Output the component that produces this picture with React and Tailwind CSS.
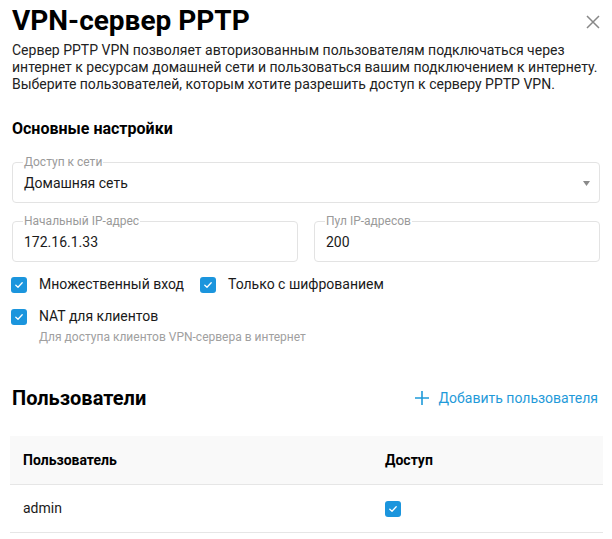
const Check = ({ size = 16 }) => (
  <span
    className="flex shrink-0 items-center justify-center rounded-[3px] bg-[#1b95dd]"
    style={{ width: size, height: size }}
  >
    <svg width="10" height="10" viewBox="0 0 10 10" fill="none">
      <path d="M1.8 5.2 L4 7.2 L8.2 2.8" stroke="#fff" strokeWidth="1.3" strokeLinecap="round" strokeLinejoin="round" />
    </svg>
  </span>
)

const Field = ({ label, children, className = '' }) => (
  <fieldset className={`rounded-[4px] border border-[#e3e3e3] px-[11px] pb-[11px] ${className}`}>
    <legend className="ml-[-1px] px-[1px] text-[12px] leading-[12px] text-[#9a9a9a]">{label}</legend>
    {children}
  </fieldset>
)

export default function App() {
  return (
    <div className="h-[539px] w-[612px] overflow-hidden bg-white font-['Roboto',sans-serif] text-[#1a1a1a]">
      <div className="flex items-start justify-between pl-3 pr-[12px] pt-[4px]">
        <h1 className="text-[28px] font-bold leading-[34px] text-black">VPN-сервер PPTP</h1>
        <svg className="mt-[11px]" width="14" height="14" viewBox="0 0 14 14">
          <path d="M1 1 L13 13 M13 1 L1 13" stroke="#888" strokeWidth="1.5" />
        </svg>
      </div>
      <p className="mt-[4px] px-3 text-[14px] leading-[17px] text-[#222]">
        Сервер PPTP VPN позволяет авторизованным пользователям подключаться через интернет к ресурсам домашней сети и
        пользоваться вашим подключением к интернету. Выберите пользователей, которым хотите разрешить доступ к серверу
        PPTP VPN.
      </p>

      <h2 className="mt-[26px] px-3 text-[16px] font-bold leading-[20px] text-black">Основные настройки</h2>

      <div className="mt-[17px] px-3">
        <Field label="Доступ к сети">
          <div className="flex items-center justify-between pt-[7px] text-[14px] leading-[16px]">
            <span>Домашняя сеть</span>
            <svg width="7" height="5" viewBox="0 0 7 5" className="mr-[-2px]">
              <path d="M0 0 L7 0 L3.5 5 Z" fill="#8a8a8a" />
            </svg>
          </div>
        </Field>
        <div className="mt-[12px] grid grid-cols-2 gap-4">
          <Field label="Начальный IP-адрес">
            <div className="pt-[7px] text-[14px] leading-[16px]">172.16.1.33</div>
          </Field>
          <Field label="Пул IP-адресов">
            <div className="pt-[7px] text-[14px] leading-[16px]">200</div>
          </Field>
        </div>
      </div>

      <div className="mt-[14px] px-[11px] text-[14px] leading-[17px]">
        <div className="flex items-center">
          <Check />
          <span className="ml-[12px]">Множественный вход</span>
          <span className="ml-[16px]">
            <Check />
          </span>
          <span className="ml-[12px]">Только с шифрованием</span>
        </div>
        <div className="mt-[15px] flex items-center">
          <Check />
          <span className="ml-[12px]">NAT для клиентов</span>
        </div>
        <div className="ml-[28px] mt-[5px] text-[12px] leading-[14px] text-[#a0a0a0]">
          Для доступа клиентов VPN-сервера в интернет
        </div>
      </div>

      <div className="mt-[42px] flex items-center justify-between pl-3 pr-[14px]">
        <h2 className="text-[20px] font-bold leading-[24px] text-black">Пользователи</h2>
        <button className="flex items-center gap-[9px] text-[14px] text-[#1f9ad9]">
          <svg width="16" height="16" viewBox="0 0 16 16">
            <path d="M8 1 V15 M1 8 H15" stroke="#1f9ad9" strokeWidth="1.6" />
          </svg>
          Добавить пользователя
        </button>
      </div>

      <div className="mt-[26px] ml-[10px] mr-[9px]">
        <div className="grid h-[49px] grid-cols-[362px_1fr] items-center border-b border-[#e6e6e6] bg-[#f9f9f9] px-[13px] text-[14px] font-bold text-black">
          <span>Пользователь</span>
          <span>Доступ</span>
        </div>
        <div className="grid h-[48px] grid-cols-[362px_1fr] items-center border-b border-[#e6e6e6] px-[13px] text-[14px]">
          <span>admin</span>
          <Check />
        </div>
      </div>
    </div>
  )
}
